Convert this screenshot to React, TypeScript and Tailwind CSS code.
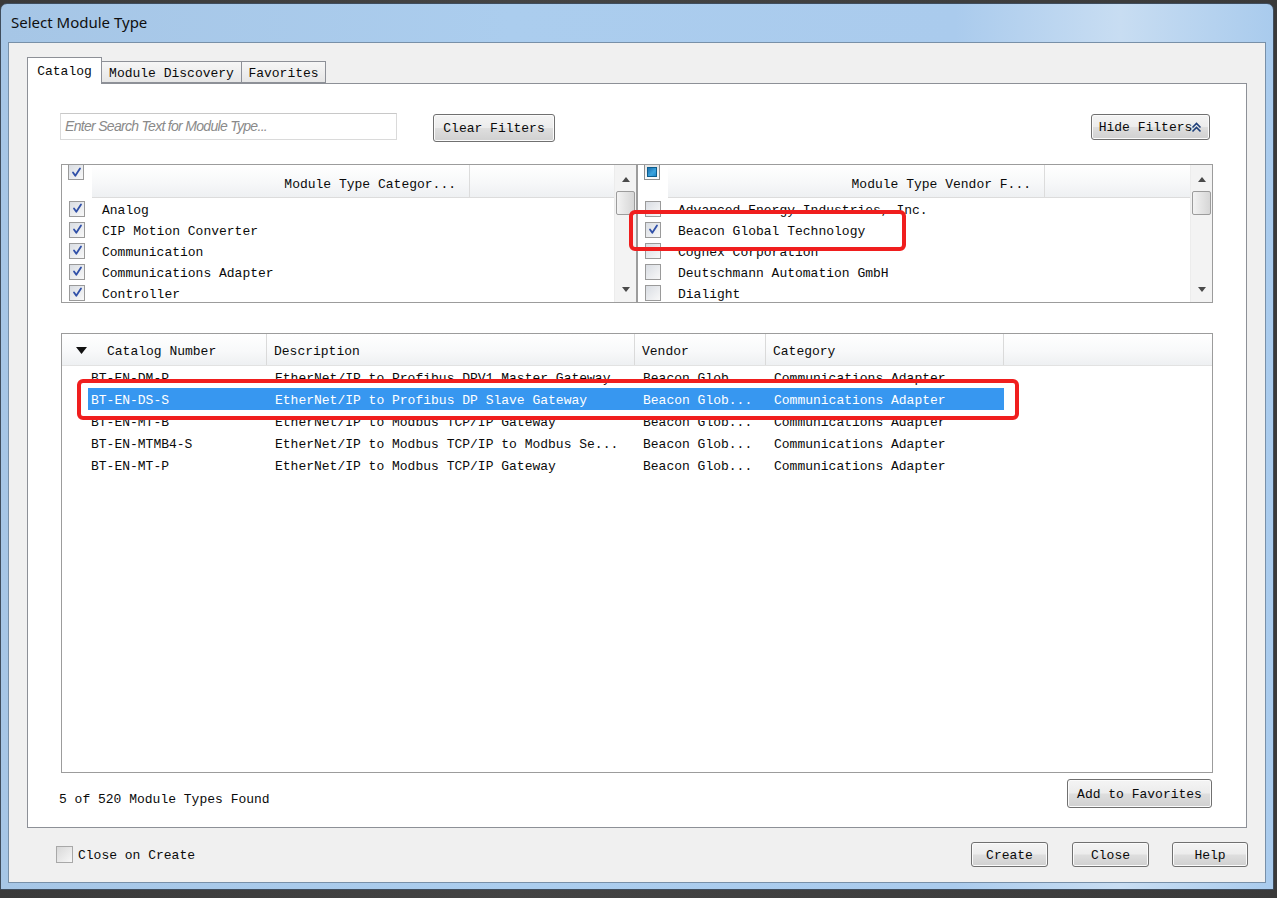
import React from "react";

const MONO = "font-['Liberation_Mono',monospace]";

function Check({ state }: { state: "on" | "off" | "mixed" }) {
  if (state === "mixed") {
    return (
      <div className="w-[16px] h-[16px] border border-[#8e8f8f] bg-[linear-gradient(#e6e6e6,#fafafa)] flex items-center justify-center">
        <div className="w-[10px] h-[10px] border border-[#0d5c8c] bg-[linear-gradient(135deg,#1b6fae,#3ca4de_60%,#1d86c8)]" />
      </div>
    );
  }
  return (
    <div className="w-[16px] h-[16px] border border-[#9a9a9a] bg-[linear-gradient(135deg,#d9dde3,#f8f8f8)] flex items-center justify-center">
      {state === "on" && (
        <svg width="11" height="11" viewBox="0 0 11 11">
          <path d="M2 5.5 L4.3 8.8 L9 1.5" fill="none" stroke="#3050a8" strokeWidth="1.8" strokeLinecap="round" strokeLinejoin="round" />
        </svg>
      )}
    </div>
  );
}

function Tri({ down }: { down?: boolean }) {
  return (
    <svg width="8" height="5" viewBox="0 0 8 5">
      <path d={down ? "M0 0 L8 0 L4 5 Z" : "M0 5 L8 5 L4 0 Z"} fill="#4a4a4a" />
    </svg>
  );
}

function Scrollbar() {
  return (
    <div className="w-[22px] h-full flex flex-col items-center bg-[#f3f3f3] border-l border-[#ececec]">
      <div className="h-[26px] flex items-center justify-center pt-[2px]">
        <Tri />
      </div>
      <div className="w-[19px] h-[24px] rounded-[2px] border border-[#9c9c9c] bg-[linear-gradient(90deg,#f3f3f3,#e4e4e4_50%,#d6d6d6)]" />
      <div className="flex-1" />
      <div className="h-[22px] flex items-center justify-center pb-[4px]">
        <Tri down />
      </div>
    </div>
  );
}

function Btn({ children, className }: { children: React.ReactNode; className: string }) {
  return (
    <div
      className={`${className} rounded-[3px] border border-[#707070] bg-[linear-gradient(#f4f4f4,#ececec_48%,#dedede_52%,#d0d0d0)] shadow-[inset_0_0_0_1px_#fbfbfb] flex items-center justify-center pt-[2px] text-[13px] text-[#0a0a0a] ${MONO}`}
    >
      {children}
    </div>
  );
}

function FilterList({
  head,
  title,
  headW,
  items,
}: {
  head: "on" | "mixed";
  title: string;
  headW: number;
  items: { t: string; c: boolean }[];
}) {
  return (
    <div className="w-[576px] h-[139px] border border-[#9c9c9c] bg-white flex overflow-hidden">
      <div className="flex-1 flex flex-col min-w-0">
        <div className="h-[33px] flex shrink-0">
          <div className="w-[30px] pl-[6px] -mt-[1px]">
            <Check state={head} />
          </div>
          <div
            className="h-full border-r border-[#dcdcdc] border-b bg-[linear-gradient(#ffffff,#f7f8f9_55%,#eef0f2)] flex justify-end pt-[12px] pr-[13px] text-[13px] leading-[16px] text-[#0a0a0a]"
            style={{ width: headW }}
          >
            <span className={MONO}>{title}</span>
          </div>
          <div className="flex-1 h-full border-b border-[#dcdcdc] bg-[linear-gradient(#ffffff,#f7f8f9_55%,#eef0f2)]" />
        </div>
        {items.map((it) => (
          <div key={it.t} className="h-[21px] flex items-center shrink-0">
            <div className="w-[30px] pl-[7px]">
              <Check state={it.c ? "on" : "off"} />
            </div>
            <div className={`pl-[10px] pt-[4px] text-[13px] text-[#0a0a0a] whitespace-nowrap ${MONO}`}>{it.t}</div>
          </div>
        ))}
      </div>
      <Scrollbar />
    </div>
  );
}

const rows = [
  ["BT-EN-DM-P", "EtherNet/IP to Profibus DPV1 Master Gateway", "Beacon Glob...", "Communications Adapter"],
  ["BT-EN-DS-S", "EtherNet/IP to Profibus DP Slave Gateway", "Beacon Glob...", "Communications Adapter"],
  ["BT-EN-MT-B", "EtherNet/IP to Modbus TCP/IP Gateway", "Beacon Glob...", "Communications Adapter"],
  ["BT-EN-MTMB4-S", "EtherNet/IP to Modbus TCP/IP to Modbus Se...", "Beacon Glob...", "Communications Adapter"],
  ["BT-EN-MT-P", "EtherNet/IP to Modbus TCP/IP Gateway", "Beacon Glob...", "Communications Adapter"],
];

export default function App() {
  return (
    <div className="relative w-[1277px] h-[898px] overflow-hidden bg-[linear-gradient(90deg,#3a3a3a,#444_40%,#3a3a3a)] pt-[3px]">
      {/* window */}
      <div className="w-[1274px] h-[887px] rounded-t-[7px] border border-[#3f4d5d] bg-[linear-gradient(90deg,#a6c6e6,#abcdee_40%,#aacbed_75%,#c8ddf2_88%,#a9cbed)] flex flex-col">
        {/* title bar */}
        <div className="h-[38px] shrink-0 flex items-center pl-[10px] pb-[1px]">
          <span className="font-['Noto_Sans',sans-serif] text-[15px] text-[#0f0f0f]">Select Module Type</span>
        </div>
        {/* client */}
        <div className="ml-[7px] w-[1258px] h-[841px] border border-[#7890a8] bg-[#f0f0f0] flex flex-col">
          {/* tabs */}
          <div className="mt-[14px] pl-[18px] h-[26px] flex items-end shrink-0">
            <div className={`w-[75px] h-[27px] -mb-[1px] relative z-10 border border-b-0 border-[#8d9097] bg-white flex items-center justify-center pt-[2px] text-[13px] text-[#0a0a0a] ${MONO}`}>
              Catalog
            </div>
            <div className={`w-[140px] h-[22px] border border-l-0 border-[#8d9097] bg-[linear-gradient(#f6f6f6,#e6e6e6)] flex items-center justify-center pt-[3px] text-[13px] text-[#0a0a0a] ${MONO}`}>
              Module Discovery
            </div>
            <div className={`w-[84px] h-[22px] border border-l-0 border-[#8d9097] bg-[linear-gradient(#f6f6f6,#e6e6e6)] flex items-center justify-center pt-[3px] text-[13px] text-[#0a0a0a] ${MONO}`}>
              Favorites
            </div>
          </div>
          {/* tab panel */}
          <div className="ml-[18px] w-[1220px] h-[745px] border border-[#8d9097] bg-white flex flex-col shrink-0">
            {/* search row */}
            <div className="mt-[29px] h-[30px] flex items-start pl-[32px] pr-[36px] shrink-0">
              <div className="w-[337px] h-[27px] border border-[#dadada] border-t-[#c8c8c8] flex items-center pl-[4px]">
                <span className="font-['Liberation_Sans',sans-serif] italic text-[14px] tracking-[-0.7px] text-[#8a8a8a]">
                  Enter Search Text for Module Type...
                </span>
              </div>
              <Btn className="ml-[36px] mt-[1px] w-[122px] h-[28px]">Clear Filters</Btn>
              <div className="flex-1" />
              <Btn className="mt-[1px] w-[119px] h-[26px] gap-[1px]">
                <span>Hide Filters</span>
                <svg width="11" height="11" viewBox="0 0 11 11" className="-ml-[2px] -mt-[2px]">
                  <path d="M1.5 5.5 L5.5 1.5 L9.5 5.5 M1.5 9.5 L5.5 5.5 L9.5 9.5" fill="none" stroke="#1d3f7a" strokeWidth="1.6" />
                </svg>
              </Btn>
            </div>
            {/* filter lists */}
            <div className="mt-[21px] pl-[33px] flex shrink-0">
              <FilterList
                head="on"
                title="Module Type Categor..."
                headW={378}
                items={[
                  { t: "Analog", c: true },
                  { t: "CIP Motion Converter", c: true },
                  { t: "Communication", c: true },
                  { t: "Communications Adapter", c: true },
                  { t: "Controller", c: true },
                ]}
              />
              <FilterList
                head="mixed"
                title="Module Type Vendor F..."
                headW={377}
                items={[
                  { t: "Advanced Energy Industries, Inc.", c: false },
                  { t: "Beacon Global Technology", c: true },
                  { t: "Cognex Corporation", c: false },
                  { t: "Deutschmann Automation GmbH", c: false },
                  { t: "Dialight", c: false },
                ]}
              />
            </div>
            {/* main table */}
            <div className="mt-[30px] ml-[33px] w-[1152px] h-[440px] border border-[#9c9c9c] bg-white flex flex-col shrink-0">
              <div className={`h-[32px] shrink-0 flex border-b border-[#e2e2e2] bg-[linear-gradient(#ffffff,#f8f9fa_55%,#eef0f2)] text-[13px] text-[#0a0a0a] ${MONO}`}>
                <div className="w-[205px] flex items-center pl-[14px] border-r border-[#dadada]">
                  <svg width="11" height="7" viewBox="0 0 11 7" className="mt-[2px]">
                    <path d="M0 0 L11 0 L5.5 7 Z" fill="#111" />
                  </svg>
                  <span className="ml-[20px] pt-[5px]">Catalog Number</span>
                </div>
                <div className="w-[368px] flex items-center pl-[7px] pt-[5px] border-r border-[#dadada]">Description</div>
                <div className="w-[131px] flex items-center pl-[7px] pt-[5px] border-r border-[#dadada]">Vendor</div>
                <div className="w-[238px] flex items-center pl-[7px] pt-[5px] border-r border-[#dadada]">Category</div>
                <div className="flex-1" />
              </div>
              {rows.map((r, i) => {
                const sel = i === 1;
                return (
                  <div
                    key={r[0]}
                    className={`ml-[26px] w-[916px] h-[22px] shrink-0 flex items-center pt-[4px] text-[13px] whitespace-nowrap ${MONO} ${
                      sel ? "bg-[#3797f0] text-white" : "text-[#0a0a0a]"
                    }`}
                  >
                    <div className="w-[179px] pl-[3px]">{r[0]}</div>
                    <div className="w-[368px] pl-[8px]">{r[1]}</div>
                    <div className="w-[131px] pl-[8px]">{r[2]}</div>
                    <div className="w-[238px] pl-[8px]">{r[3]}</div>
                  </div>
                );
              })}
            </div>
            {/* status row */}
            <div className="mt-[6px] flex items-start pl-[31px] pr-[34px] shrink-0">
              <span className={`mt-[11px] text-[13px] text-[#0a0a0a] ${MONO}`}>5 of 520 Module Types Found</span>
              <div className="flex-1" />
              <Btn className="w-[145px] h-[29px]">Add to Favorites</Btn>
            </div>
          </div>
          {/* bottom bar */}
          <div className="flex-1 flex items-center pl-[47px] pr-[17px] pb-[1px]">
            <div className="w-[17px] h-[17px] border border-[#a8a8a8] bg-[linear-gradient(135deg,#d8d8d8,#f7f7f7)]" />
            <span className={`ml-[5px] pt-[2px] text-[13px] text-[#0a0a0a] ${MONO}`}>Close on Create</span>
            <div className="flex-1" />
            <Btn className="w-[77px] h-[25px]">Create</Btn>
            <Btn className="ml-[24px] w-[77px] h-[25px]">Close</Btn>
            <Btn className="ml-[23px] w-[76px] h-[25px]">Help</Btn>
          </div>
        </div>
      </div>
      {/* red annotation rectangles */}
      <div className="absolute left-[629px] top-[210px] w-[277px] h-[41px] border-[4px] border-[#f01e1e] rounded-[6px] pointer-events-none" />
      <div className="absolute left-[77px] top-[379px] w-[942px] h-[41px] border-[4px] border-[#f01e1e] rounded-[6px] pointer-events-none" />
    </div>
  );
}
